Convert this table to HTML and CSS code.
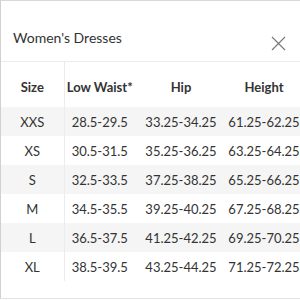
FILE: index.html
```html
<!DOCTYPE html>
<html lang="en">
<head>
    <meta charset="UTF-8">
    <title>Size Chart</title>
    <link rel="stylesheet" href="styles.css">
</head>
<body>
    <div class="modal">
        <!-- Header -->
        <div class="modal-header">
            <h2>Women's Dresses</h2>
            <button class="close" aria-label="Close">
                <svg width="15" height="15" viewBox="0 0 15 15">
                    <path d="M1 1 L14 14 M14 1 L1 14" stroke="#7a7a7a" stroke-width="1.2" fill="none"/>
                </svg>
            </button>
        </div>

        <!-- Size table -->
        <table class="sizes">
            <colgroup>
                <col class="col-size">
                <col class="col-waist">
                <col class="col-hip">
                <col class="col-height">
            </colgroup>
            <thead>
                <tr>
                    <th>Size</th>
                    <th>Low Waist*</th>
                    <th>Hip</th>
                    <th>Height</th>
                </tr>
            </thead>
            <tbody>
                <tr><td>XXS</td><td>28.5-29.5</td><td>33.25-34.25</td><td>61.25-62.25</td></tr>
                <tr><td>XS</td><td>30.5-31.5</td><td>35.25-36.25</td><td>63.25-64.25</td></tr>
                <tr><td>S</td><td>32.5-33.5</td><td>37.25-38.25</td><td>65.25-66.25</td></tr>
                <tr><td>M</td><td>34.5-35.5</td><td>39.25-40.25</td><td>67.25-68.25</td></tr>
                <tr><td>L</td><td>36.5-37.5</td><td>41.25-42.25</td><td>69.25-70.25</td></tr>
                <tr><td>XL</td><td>38.5-39.5</td><td>43.25-44.25</td><td>71.25-72.25</td></tr>
            </tbody>
        </table>
    </div>
</body>
</html>
```

FILE: styles.css
```css
* {
    margin: 0;
    padding: 0;
    box-sizing: border-box;
    font-family: Lato, 'Open Sans', sans-serif;
}

body {
    background: #fff;
    width: 300px;
    height: 300px;
    overflow: hidden;
}

.modal {
    height: 299px;
    border-top: 1px solid #d8d8d8;
    border-left: 1px solid #d0d0d0;
    border-bottom: 1px solid #e2e2e2;
    background: #fff;
}

.modal-header {
    height: 61px;
    display: flex;
    align-items: flex-start;
    justify-content: space-between;
    padding: 28px 14px 0 12px;
    border-bottom: 1px solid #ececec;
}

.modal-header h2 {
    font-size: 14px;
    line-height: 17px;
    font-weight: 400;
    color: #333;
}

.close {
    border: none;
    background: none;
    width: 15px;
    height: 15px;
    margin-top: 7px;
    display: flex;
}

.sizes {
    width: 300px;
    border-collapse: collapse;
    table-layout: fixed;
    color: #333;
}

.col-size { width: 63px; }
.col-waist { width: 71px; }
.col-hip { width: 92px; }
.col-height { width: 74px; }

.sizes th,
.sizes td {
    text-align: center;
    white-space: nowrap;
}

.sizes th {
    height: 45px;
    font-size: 13px;
    font-weight: 700;
    padding-top: 4px;
}

.sizes td {
    height: 29px;
    font-size: 13px;
}

.sizes th:first-child,
.sizes td:first-child {
    border-right: 1px solid #ececec;
}

.sizes tbody tr:nth-child(odd) {
    background: #f5f5f5;
}
```
